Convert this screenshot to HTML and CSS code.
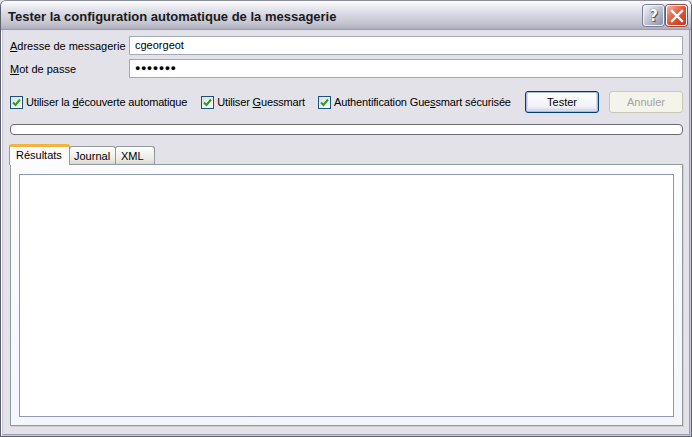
FILE: index.html
```html
<!DOCTYPE html>
<html lang="fr">
<head>
<meta charset="utf-8">
<link rel="stylesheet" href="styles.css">
</head>
<body>
<div class="window">
  <div class="titlebar">
    <span class="title">Tester la configuration automatique de la messagerie</span>
    <div class="tbtns">
      <span class="tbtn help">?</span>
      <span class="tbtn close"><svg width="14" height="14" viewBox="0 0 14 14"><path d="M2 2 L12 12 M12 2 L2 12" stroke="#fff" stroke-width="2.4" stroke-linecap="square"/></svg></span>
    </div>
  </div>
  <div class="body">
    <div class="form">
      <label class="lbl"><u>A</u>dresse de messagerie</label>
      <div class="input">cgeorgeot</div>
      <label class="lbl"><u>M</u>ot de passe</label>
      <div class="input pw">&#9679;&#9679;&#9679;&#9679;&#9679;&#9679;&#9679;</div>
    </div>
    <div class="optrow">
      <span class="chk c1"><span class="box"><svg width="9" height="9" viewBox="0 0 9 9"><path d="M1 4.5 L3.5 7 L8 1.5" fill="none" stroke="#21a121" stroke-width="2"/></svg></span><span class="ctext">Utiliser la <u>d</u>écouverte automatique</span></span>
      <span class="chk c2"><span class="box"><svg width="9" height="9" viewBox="0 0 9 9"><path d="M1 4.5 L3.5 7 L8 1.5" fill="none" stroke="#21a121" stroke-width="2"/></svg></span><span class="ctext">Utiliser <u>G</u>uessmart</span></span>
      <span class="chk c3"><span class="box"><svg width="9" height="9" viewBox="0 0 9 9"><path d="M1 4.5 L3.5 7 L8 1.5" fill="none" stroke="#21a121" stroke-width="2"/></svg></span><span class="ctext">Authentification Gue<u>s</u>smart sécurisée</span></span>
      <span class="btn default">Tester</span>
      <span class="btn disabled">Annuler</span>
    </div>
    <div class="progress"></div>
    <div class="tabs">
      <span class="tab active">Résultats</span>
      <span class="tab">Journal</span>
      <span class="tab">XML</span>
    </div>
    <div class="panel">
      <div class="results"></div>
    </div>
  </div>
</div>
</body>
</html>
```
FILE: styles.css
```css
* { box-sizing: border-box; }
html, body { margin: 0; padding: 0; }
body {
  width: 692px; height: 437px; overflow: hidden;
  font-family: "Liberation Sans", Arial, sans-serif;
  font-size: 11px; color: #000;
  background: #e4e3ea;
}
u { text-decoration: underline; text-underline-offset: 1px; }
.window {
  width: 692px; height: 437px;
  display: flex; flex-direction: column;
  border: 1px solid #5e5f6f;
  border-top-color: #8c8e9c;
  border-radius: 6px 6px 0 0;
  background: #e3e2e8;
  box-shadow: inset 1px 0 0 #fdfdfd, inset -1px 0 0 #c9c8d3, inset 0 -1px 0 #c9c8d3, inset 2px 0 0 #c9c8d3, inset -2px 0 0 #9d9daa, inset 0 -2px 0 #9d9daa;
}
.titlebar {
  height: 29px; flex: none;
  display: flex; align-items: center; justify-content: space-between;
  padding: 0 4px 0 7px;
  border-radius: 5px 5px 0 0;
  background: linear-gradient(#fdfdfe 0%, #e7e7ee 25%, #d6d6e0 50%, #c4c4d0 80%, #adaebe 100%);
  border-bottom: 1px solid #9b9bab;
}
.title {
  font-family: "Liberation Sans", sans-serif;
  font-size: 13px; font-weight: bold; color: #1a1a22;
  letter-spacing: 0;
  margin-top: 3px;
}
.tbtns { display: flex; gap: 2px; margin-top: 1px; }
.tbtn {
  width: 21px; height: 21px; border-radius: 3px;
  display: flex; align-items: center; justify-content: center;
  border: 1px solid #fff;
}
.help {
  background: linear-gradient(135deg, #f2f2f8, #b6b8cb 60%, #8e92a8);
  color: #fff; font-weight: bold; font-size: 15px;
  font-family: "DejaVu Sans", sans-serif;
  text-shadow: 0 0 1px #334, 1px 1px 0 #556;
  border-color: #eef;
  box-shadow: 0 0 0 1px #7c8096;
}
.close {
  background: linear-gradient(135deg, #f4b6a4, #e0553a 50%, #c2351e);
  box-shadow: 0 0 0 1px #9b4c3d;
}
.body {
  flex: 1;
  padding: 6px 8px 10px 8px;
  display: flex; flex-direction: column;
}
.form {
  display: grid; grid-template-columns: 120px 1fr;
  row-gap: 4px; align-items: center;
}
.lbl { padding-left: 1px; }
.input {
  height: 19px; background: #fff;
  border: 1px solid #a3a9b5;
  padding: 2px 0 0 5px;
}
.pw { font-size: 9px; letter-spacing: 0.5px; padding-top: 3px; }
.optrow {
  display: flex; align-items: center;
  margin-top: 13px; height: 22px;
}
.chk { display: flex; align-items: center; white-space: nowrap; }
.ctext { letter-spacing: -0.15px; }
.box {
  width: 13px; height: 13px; margin-right: 3px;
  border: 1px solid #1c5180;
  background: linear-gradient(135deg, #dcdcd7, #fff);
  display: flex; align-items: center; justify-content: center;
}
.c1 { margin-left: 1px; }
.c2 { margin-left: 14px; }
.c3 { margin-left: 13px; }
.btn {
  width: 74px; height: 22px;
  display: flex; align-items: center; justify-content: center;
  border-radius: 3px;
}
.default {
  margin-left: auto;
  border: 1px solid #003c74;
  background: linear-gradient(#fff, #f3f3f8 70%, #d5d6e2);
  box-shadow: inset 0 0 0 1px #aabbe0, inset 0 -1px 0 2px #d4dcf1;
}
.disabled {
  margin-left: 10px;
  border: 1px solid #c9c7ba;
  background: #f5f4ea;
  color: #a3a2a6;
}
.progress {
  margin-top: 11px; height: 11px;
  border: 1px solid #6c6b72;
  border-radius: 4px;
  background: #fff;
  margin-left: 1px;
}
.tabs {
  display: flex; align-items: flex-end;
  margin-top: 8px; height: 21px; padding-left: 1px;
  position: relative; z-index: 1;
}
.tab {
  height: 18px; padding: 0 4px 0 4px;
  border: 1px solid #919b9c; border-bottom: none;
  border-radius: 3px 3px 0 0;
  background: linear-gradient(#fefefe, #ecebe6 70%, #d8d7cf);
  display: flex; align-items: center;
  margin-left: -1px;
}
.tab:nth-child(2) { width: 47px; padding-left: 4px; }
.tab:nth-child(3) { width: 40px; padding-left: 5px; }
.tab.active {
  height: 21px; width: 61px;
  padding: 0 0 3px 6px;
  background: #fcfcfe;
  border-top: 3px solid #f2b43c;
  margin-left: -1px;
  margin-bottom: -1px;
}
.panel {
  flex: 1;
  margin-left: 1px;
  border: 1px solid #919b9c;
  background: linear-gradient(#fcfcfe, #f4f6fb);
  padding: 9px 8px 8px 8px;
  box-shadow: 1px 1px 0 #d0cfcc;
}
.results {
  height: 100%;
  background: #fff;
  border: 1px solid #8f9ab0;
}
```
